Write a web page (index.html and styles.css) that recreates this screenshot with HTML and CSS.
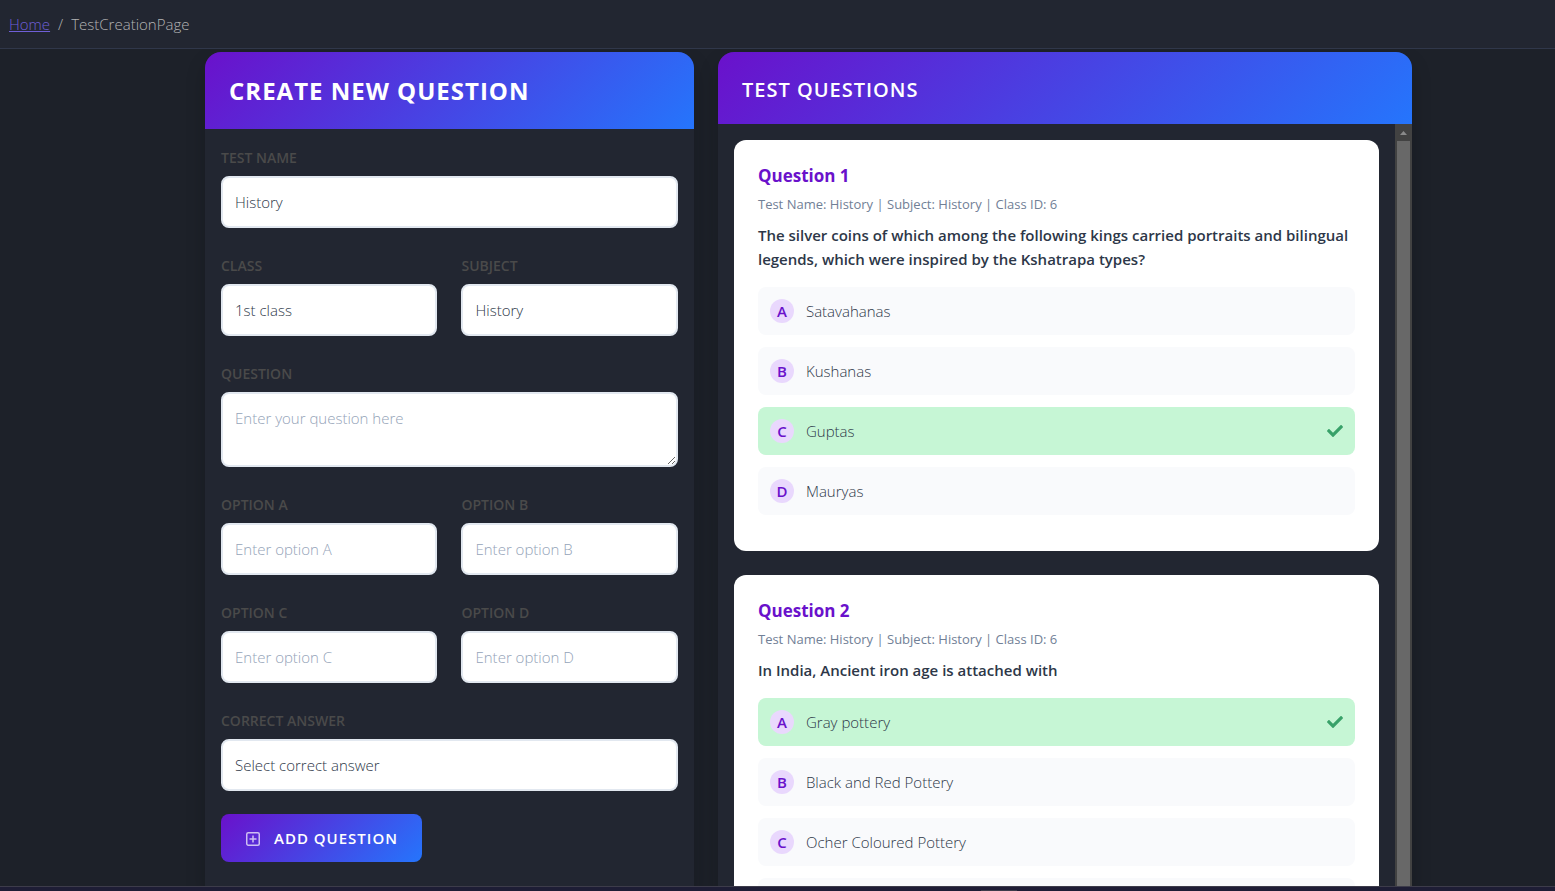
FILE: index.html
```html
<!DOCTYPE html>
<html lang="en">
<head>
    <meta charset="UTF-8">
    <meta name="viewport" content="width=device-width, initial-scale=1.0">
    <title>TestCreationPage</title>
    <link rel="stylesheet" href="styles.css">
</head>
<body>
    <nav class="breadcrumb">
        <a href="#">Home</a>
        <span>/</span>
        <span>TestCreationPage</span>
    </nav>

    <main class="page">
        <div class="columns">
            <section class="panel">
                <h1 class="panel-header">Create New Question</h1>
                <form class="question-form">
                    <div class="field">
                        <label for="test-name">Test Name</label>
                        <input type="text" id="test-name" value="History">
                    </div>
                    <div class="field-row">
                        <div class="field">
                            <label for="class-id">Class</label>
                            <select id="class-id">
                                <option>1st class</option>
                                <option>2nd class</option>
                            </select>
                        </div>
                        <div class="field">
                            <label for="subject">Subject</label>
                            <select id="subject">
                                <option>History</option>
                            </select>
                        </div>
                    </div>
                    <div class="field">
                        <label for="question">Question</label>
                        <textarea id="question" placeholder="Enter your question here"></textarea>
                    </div>
                    <div class="field-row">
                        <div class="field">
                            <label for="option-a">Option A</label>
                            <input type="text" id="option-a" placeholder="Enter option A">
                        </div>
                        <div class="field">
                            <label for="option-b">Option B</label>
                            <input type="text" id="option-b" placeholder="Enter option B">
                        </div>
                    </div>
                    <div class="field-row">
                        <div class="field">
                            <label for="option-c">Option C</label>
                            <input type="text" id="option-c" placeholder="Enter option C">
                        </div>
                        <div class="field">
                            <label for="option-d">Option D</label>
                            <input type="text" id="option-d" placeholder="Enter option D">
                        </div>
                    </div>
                    <div class="field">
                        <label for="correct-answer">Correct Answer</label>
                        <select id="correct-answer">
                            <option>Select correct answer</option>
                            <option>A</option>
                            <option>B</option>
                            <option>C</option>
                            <option>D</option>
                        </select>
                    </div>
                </form>
                <div class="form-actions">
                    <button type="button" class="add-button">
                        <svg viewBox="0 0 16 16" width="16" height="16" fill="none" stroke="currentColor">
                            <rect x="1.75" y="2.75" width="12.5" height="12.5" rx="1.5" stroke-width="1.5"/>
                            <path d="M8 5.5v7M4.5 9h7" stroke-width="1.5"/>
                        </svg>
                        Add Question
                    </button>
                </div>
            </section>

            <section class="panel">
                <h2 class="panel-header small">Test Questions</h2>
                <div class="scroll-area">
                    <div class="question-list">
                        <article class="card">
                            <h3>Question 1</h3>
                            <p class="meta">Test Name: History | Subject: History | Class ID: 6</p>
                            <p class="text">The silver coins of which among the following kings carried portraits and bilingual legends, which were inspired by the Kshatrapa types?</p>
                            <ul class="options">
                                <li><span class="letter">A</span>Satavahanas</li>
                                <li><span class="letter">B</span>Kushanas</li>
                                <li class="correct"><span class="letter">C</span>Guptas
                                    <svg class="check" viewBox="0 0 512 512" width="16" height="16"><path fill="currentColor" d="M173.898 439.404l-166.4-166.4c-9.997-9.997-9.997-26.206 0-36.204l36.203-36.204c9.997-9.998 26.207-9.998 36.204 0L192 312.69 432.095 72.596c9.997-9.997 26.207-9.997 36.204 0l36.203 36.204c9.997 9.997 9.997 26.206 0 36.204l-294.4 294.401c-9.998 9.997-26.207 9.997-36.204-.001z"/></svg>
                                </li>
                                <li><span class="letter">D</span>Mauryas</li>
                            </ul>
                        </article>
                        <article class="card">
                            <h3>Question 2</h3>
                            <p class="meta">Test Name: History | Subject: History | Class ID: 6</p>
                            <p class="text">In India, Ancient iron age is attached with</p>
                            <ul class="options">
                                <li class="correct"><span class="letter">A</span>Gray pottery
                                    <svg class="check" viewBox="0 0 512 512" width="16" height="16"><path fill="currentColor" d="M173.898 439.404l-166.4-166.4c-9.997-9.997-9.997-26.206 0-36.204l36.203-36.204c9.997-9.998 26.207-9.998 36.204 0L192 312.69 432.095 72.596c9.997-9.997 26.207-9.997 36.204 0l36.203 36.204c9.997 9.997 9.997 26.206 0 36.204l-294.4 294.401c-9.998 9.997-26.207 9.997-36.204-.001z"/></svg>
                                </li>
                                <li><span class="letter">B</span>Black and Red Pottery</li>
                                <li><span class="letter">C</span>Ocher Coloured Pottery</li>
                                <li></li>
                            </ul>
                        </article>
                    </div>
                    <div class="scrollbar">
                        <svg viewBox="0 0 17 17" width="17" height="17"><path d="M5 11l3.5-4 3.5 4z" fill="#8a8a8a"/></svg>
                        <div class="thumb"></div>
                    </div>
                </div>
            </section>
        </div>
    </main>

    <footer class="bottom-bar"><div class="handle"></div></footer>
</body>
</html>
```
FILE: styles.css
```css
* {
    box-sizing: border-box;
}

body {
    margin: 0;
    height: 100vh;
    display: flex;
    flex-direction: column;
    overflow: hidden;
    background-color: #1d2129;
    font-family: "Open Sans", "Noto Sans", sans-serif;
    font-size: 15px;
    font-weight: 300;
    line-height: 24px;
    color: #2d3748;
}

h1, h2, h3, p, ul {
    margin: 0;
    padding: 0;
}

.breadcrumb {
    display: flex;
    flex-shrink: 0;
    gap: 8px;
    padding: 12px 9px;
    background-color: #222631;
    border-bottom: 1px solid #30374a;
    color: #b4b4b4;
}

.breadcrumb a {
    color: #6f5fd8;
}

.page {
    flex: 1;
    min-height: 0;
    padding: 3px 0 0 62px;
    overflow: hidden;
}

.columns {
    display: grid;
    grid-template-columns: 31fr 44fr;
    gap: 24px;
    max-width: 1207px;
    height: 100%;
    margin: 0 auto;
}

.panel {
    display: flex;
    flex-direction: column;
    min-height: 0;
    background-color: #222631;
    border-radius: 16px 16px 0 0;
    box-shadow: 0 10px 20px rgba(0, 0, 0, 0.2);
}

.panel-header {
    padding: 24px;
    border-radius: 16px 16px 0 0;
    background: linear-gradient(135deg, #6a11cb 0%, #2575fc 100%);
    color: #fff;
    font-size: 24px;
    line-height: 29px;
    font-weight: 700;
    letter-spacing: 1px;
    text-transform: uppercase;
}

.panel-header.small {
    padding-bottom: 20px;
    font-size: 20px;
    line-height: 28px;
    font-weight: 600;
}

.question-form {
    display: flex;
    flex-direction: column;
    gap: 25px;
    padding: 16px 16px 0;
}

.field-row {
    display: grid;
    grid-template-columns: 1fr 1fr;
    gap: 24px;
}

.field {
    display: flex;
    flex-direction: column;
    min-width: 0;
}

.field label {
    margin-bottom: 6px;
    color: #4a4a4a;
    font-size: 14px;
    line-height: 25px;
    font-weight: 600;
    text-transform: uppercase;
}

.field input,
.field select,
.field textarea {
    width: 100%;
    height: 52px;
    margin: 0;
    padding: 12px;
    border: 2px solid #e2e8f0;
    border-radius: 8px;
    background-color: #fff;
    color: #2d3748;
    font: inherit;
    appearance: none;
}

.field textarea {
    height: 75px;
}

.field ::placeholder {
    color: #94a3b8;
}

.form-actions {
    padding: 23px 16px 24px;
}

.add-button {
    display: flex;
    align-items: center;
    gap: 13px;
    padding: 12px 24px;
    border: none;
    border-radius: 8px;
    background: linear-gradient(135deg, #6a11cb 0%, #2575fc 100%);
    color: #fff;
    font: inherit;
    font-weight: 600;
    letter-spacing: 1px;
    text-transform: uppercase;
    cursor: pointer;
}

.add-button svg {
    opacity: 0.7;
}

.scroll-area {
    display: flex;
    flex: 1;
    min-height: 0;
}

.question-list {
    display: flex;
    flex: 1;
    flex-direction: column;
    gap: 24px;
    padding: 16px;
    overflow-y: auto;
    scrollbar-width: none;
}

.scrollbar {
    display: flex;
    flex-direction: column;
    width: 17px;
    background-color: #424242;
}

.scrollbar .thumb {
    flex: 1;
    margin: 0 2px;
    background-color: #686868;
}

.card {
    flex-shrink: 0;
    padding: 24px;
    border-radius: 12px;
    background-color: #fff;
}

.card h3 {
    margin-bottom: 6px;
    color: #6a11cb;
    font-size: 17px;
    line-height: 24px;
    font-weight: 700;
}

.card .meta {
    margin-bottom: 8px;
    color: #718096;
    font-size: 13px;
    line-height: 21px;
    font-weight: 400;
}

.card .text {
    margin-bottom: 16px;
    font-weight: 600;
}

.options {
    list-style: none;
}

.options li {
    display: flex;
    align-items: center;
    gap: 12px;
    min-height: 48px;
    margin-bottom: 12px;
    padding: 12px;
    border-radius: 8px;
    background-color: #f9fafc;
}

.options .correct {
    background-color: #c6f6d5;
}

.letter {
    width: 24px;
    height: 24px;
    border-radius: 50%;
    background-color: #e9d8fd;
    color: #6a11cb;
    font-weight: 600;
    text-align: center;
}

.check {
    margin-left: auto;
    color: #38a169;
}

.bottom-bar {
    flex-shrink: 0;
    height: 5px;
    border-top: 1px solid #3d3c4a;
    background-color: #1e1d35;
}

.handle {
    width: 36px;
    height: 1px;
    margin: 3px 0 0 63.1%;
    background-color: #3d3c4a;
}
```
